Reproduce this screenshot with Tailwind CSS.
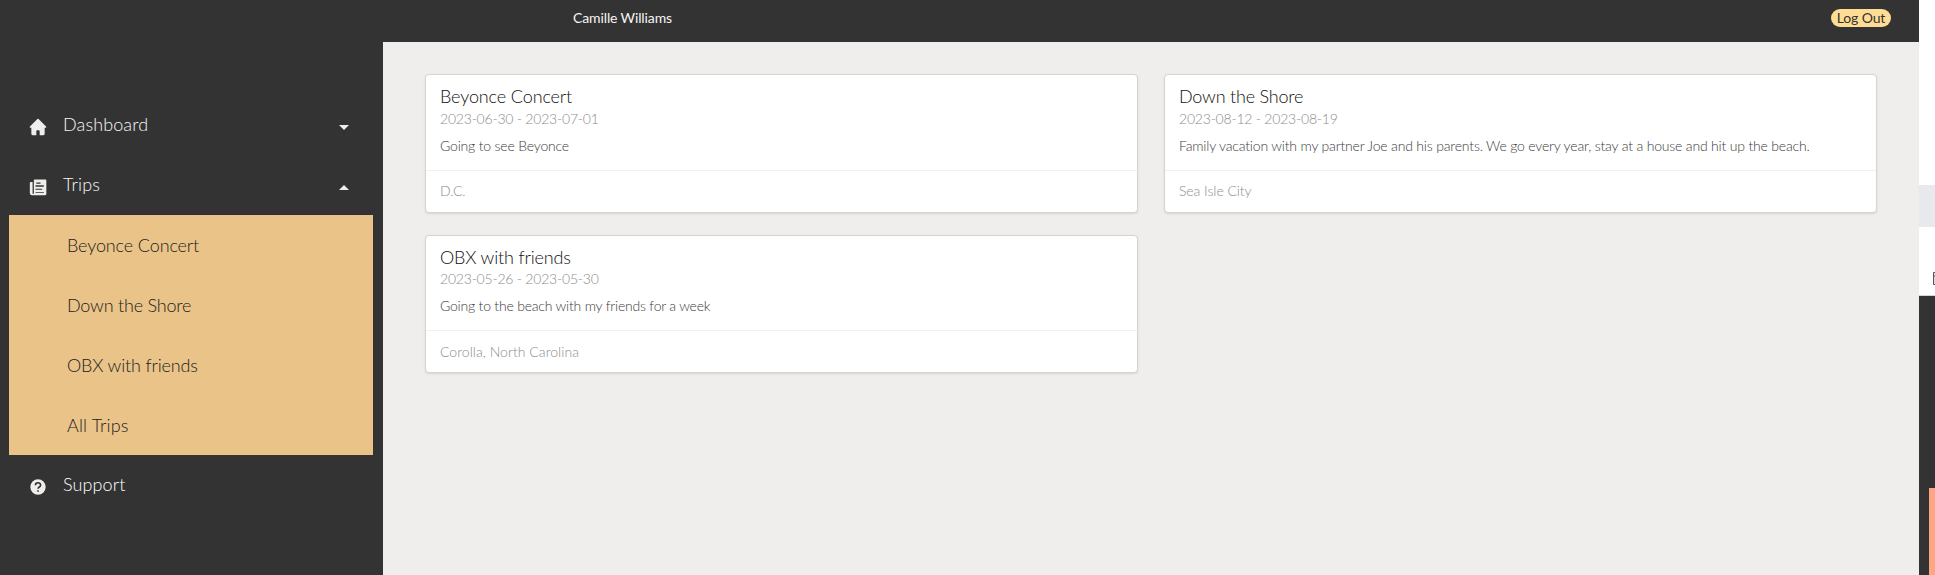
<!DOCTYPE html>
<html lang="en">
<head>
<meta charset="utf-8">
<title>Trips</title>
<script src="https://cdn.jsdelivr.net/npm/@tailwindcss/browser@4"></script>
</head>
<body class="flex h-[575px] w-[1935px] overflow-hidden bg-white font-['Lato',sans-serif] font-light">
<div class="flex w-[1919px] flex-col bg-[#efeeec]">
  <header class="flex h-[42px] shrink-0 items-start justify-between bg-[#333333] pl-[573px] pr-7 pt-[9px] text-sm leading-[18px]">
    <span class="font-normal tracking-[-0.12px] text-[#f6f5f3]">Camille Williams</span>
    <button class="h-[18px] w-[60px] rounded-full bg-[#ffdc93] font-normal tracking-[-0.12px] leading-[18px] text-[#333333]">Log Out</button>
  </header>
  <div class="flex min-h-0 flex-1">
    <nav class="w-[383px] shrink-0 bg-[#333333] pl-[9px] pr-2.5 pt-[53px] text-lg text-[#f8f7f5]">
      <a class="flex h-[60px] items-center pl-[19px] pr-6">
        <svg class="mt-1 size-5" viewBox="0 0 24 24" fill="#efeeec"><path d="M12.7 2.3a1 1 0 0 0-1.4 0l-9 9A1 1 0 0 0 3 13h1v7a2 2 0 0 0 2 2h4v-5a1 1 0 0 1 1-1h2a1 1 0 0 1 1 1v5h4a2 2 0 0 0 2-2v-7h1a1 1 0 0 0 .7-1.7z"/></svg>
        <span class="mb-0.5 ml-[15px] flex-1 tracking-[0.12px]">Dashboard</span>
        <svg class="mt-1 h-[5px] w-2.5" viewBox="0 0 10 5" fill="#efeeec"><path d="M0 0h10L5 5z"/></svg>
      </a>
      <a class="flex h-[60px] items-center pl-[19px] pr-6">
        <svg class="mt-1 size-5" viewBox="0 0 24 24" fill="#efeeec"><path d="M21 3H8a1 1 0 0 0-1 1v16.200H5.500V6H3.200a1 1 0 0 0-1 1v12a3 3 0 0 0 3 3H20.200a1.800 1.800 0 0 0 1.800-2V4a1 1 0 0 0-1-1zM10 6.500h5V8h-5zm9 12.500H9v-1h10zm-2-3.700H9V14h8zm2-3.500H9V10h10z" fill-rule="evenodd"/></svg>
        <span class="mb-0.5 ml-[15px] flex-1 tracking-[0.2px]">Trips</span>
        <svg class="mt-1 h-[5px] w-2.5" viewBox="0 0 10 5" fill="#efeeec"><path d="M0 5h10L5 0z"/></svg>
      </a>
      <div class="bg-[#eac388] pl-[58px] text-[#222222]">
        <a class="flex h-[60px] items-center tracking-[-0.12px]">Beyonce Concert</a>
        <a class="flex h-[60px] items-center tracking-[-0.2px]">Down the Shore</a>
        <a class="flex h-[60px] items-center tracking-[-0.15px]">OBX with friends</a>
        <a class="flex h-[60px] items-center tracking-[0.15px]">All Trips</a>
      </div>
      <a class="flex h-[60px] items-center pl-[19px] pr-[23px]">
        <svg class="mt-1 size-5" viewBox="0 0 24 24"><circle cx="12" cy="12" r="9.200" fill="#efeeec"/><path d="M8.900 9.800c.1-4 6.300-3.700 6.200 0 0 2.300-3 2-3.100 4.400M12 15.800v2" fill="none" stroke="#333333" stroke-width="2"/></svg>
        <span class="mb-0.5 ml-[15px] tracking-[0.1px] text-white">Support</span>
      </a>
    </nav>
    <main class="grid flex-1 grid-cols-2 content-start gap-x-[26px] gap-y-[22px] px-[42px] pt-8">
      <article class="h-[139px] rounded-[4px] border border-[#d4d4d5] bg-white shadow-[0_1px_2px_0_#d4d4d5]">
        <div class="h-[96px] border-b border-[#f0f0f0] px-3.5 pt-2.5">
          <h2 class="text-lg leading-[23px] tracking-[-0.12px] text-[#111111]">Beyonce Concert</h2>
          <p class="mt-px text-sm leading-5 tracking-[-0.21px] text-[#8c8c8c]">2023-06-30 - 2023-07-01</p>
          <p class="mt-[7px] text-sm leading-5 tracking-[-0.18px] text-[#3c3c3c]">Going to see Beyonce</p>
        </div>
        <p class="px-3.5 pt-2.5 text-sm leading-5 tracking-[-0.1px] text-[#8c8c8c]">D.C.</p>
      </article>
      <article class="h-[139px] rounded-[4px] border border-[#d4d4d5] bg-white shadow-[0_1px_2px_0_#d4d4d5]">
        <div class="h-[96px] border-b border-[#f0f0f0] px-3.5 pt-2.5">
          <h2 class="text-lg leading-[23px] tracking-[-0.2px] text-[#111111]">Down the Shore</h2>
          <p class="mt-px text-sm leading-5 tracking-[-0.21px] text-[#8c8c8c]">2023-08-12 - 2023-08-19</p>
          <p class="mt-[7px] text-sm leading-5 tracking-[-0.18px] text-[#3c3c3c]">Family vacation with my partner Joe and his parents. We go every year, stay at a house and hit up the beach.</p>
        </div>
        <p class="px-3.5 pt-2.5 text-sm leading-5 tracking-[-0.05px] text-[#8c8c8c]">Sea Isle City</p>
      </article>
      <article class="h-[138px] rounded-[4px] border border-[#d4d4d5] bg-white shadow-[0_1px_2px_0_#d4d4d5]">
        <div class="h-[95px] border-b border-[#f0f0f0] px-3.5 pt-2.5">
          <h2 class="text-lg leading-[22px] tracking-[-0.15px] text-[#111111]">OBX with friends</h2>
          <p class="mt-px text-sm leading-5 tracking-[-0.21px] text-[#8c8c8c]">2023-05-26 - 2023-05-30</p>
          <p class="mt-[7px] text-sm leading-5 tracking-[-0.2px] text-[#3c3c3c]">Going to the beach with my friends for a week</p>
        </div>
        <p class="px-3.5 pt-[11px] text-sm leading-5 tracking-[0.04px] text-[#8c8c8c]">Corolla, North Carolina</p>
      </article>
    </main>
  </div>
</div>
<aside class="flex w-4 flex-col overflow-hidden bg-white">
  <div class="mt-[185px] h-[42px] shrink-0 bg-[#e8e9ed]"></div>
  <div class="flex h-[69px] shrink-0 items-end border-b border-[#d4d4d4] pb-[10px] pl-3.5">
    <svg class="h-[13px] w-[14px] shrink-0" viewBox="0 0 14 13" fill="#dddddd" stroke="#555555"><path d="M.5.500h13v12H.5zM.5 4h13"/></svg>
  </div>
  <div class="flex-1 bg-[#333333] pl-2.5 pt-48"><div class="h-[87px] bg-[#fea583]"></div></div>
</aside>
</body>
</html>
